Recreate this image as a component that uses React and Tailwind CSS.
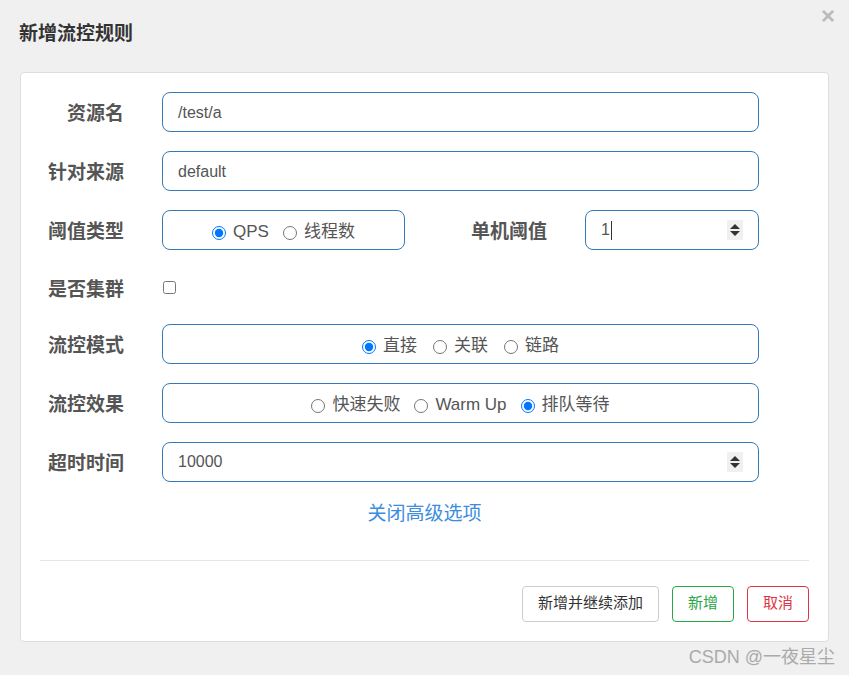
import React from "react";

const font = { fontFamily: '"Liberation Sans", "Noto Sans CJK SC", sans-serif' };

function Label({ children, w = "w-[103px]" }) {
  return (
    <div className={`${w} shrink-0 pt-[5px] text-right text-[19px] font-bold text-[#555]`}>{children}</div>
  );
}

function Radio({ label, checked }) {
  return (
    <label className="flex items-center gap-[7px]">
      <input type="radio" defaultChecked={checked} name={label} className="m-0 mt-[1px] h-[14px] w-[14px]" />
      <span>{label}</span>
    </label>
  );
}

function Spinner() {
  return (
    <span className="flex h-[20px] w-[16px] flex-col items-center justify-center gap-[2px] bg-[#f0f0f0]">
      <span className="h-0 w-0 border-x-[5px] border-b-[5px] border-x-transparent border-b-[#333]" />
      <span className="h-0 w-0 border-x-[5px] border-t-[5px] border-x-transparent border-t-[#333]" />
    </span>
  );
}

const box = "h-[40px] rounded-[8px] border border-[#337ab7] bg-white text-[16px] text-[#555]";

export default function App() {
  return (
    <div className="h-[675px] w-[849px] overflow-hidden bg-[#f0f0f0]" style={font}>
      {/* en-tête */}
      <div className="flex h-[72px] items-start justify-between">
        <h2 className="ml-[19px] mt-[20px] text-[19px] font-bold text-[#333]">新增流控规则</h2>
        <span className="mr-[14px] mt-[4px] text-[24px] font-bold leading-none text-[#bbb]">×</span>
      </div>

      {/* carte */}
      <div className="mx-[20px] h-[570px] rounded-[4px] border border-[#ddd] bg-white pt-[19px]">
        <div className="flex flex-col gap-[19px]">
          <div className="flex items-center gap-[38px]">
            <Label>资源名</Label>
            <div className={`${box} flex w-[597px] items-center px-[15px] pt-[2px]`}>/test/a</div>
          </div>

          <div className="flex items-center gap-[38px]">
            <Label>针对来源</Label>
            <div className={`${box} flex w-[597px] items-center px-[15px] pt-[2px]`}>default</div>
          </div>

          <div className="flex items-center">
            <Label>阈值类型</Label>
            <div className={`${box} ml-[38px] flex w-[243px] items-center justify-center gap-[14px] pt-[4px] text-[17px]`}>
              <Radio label="QPS" checked />
              <Radio label="线程数" />
            </div>
            <Label w="w-[142px]">单机阈值</Label>
            <div className={`${box} ml-[38px] flex w-[174px] items-center justify-between px-[15px]`}>
              <span className="flex items-center">
                1<span className="ml-[1px] h-[19px] w-px bg-[#333]" />
              </span>
              <Spinner />
            </div>
          </div>
        </div>

        <div className="mt-[19px] flex h-[37px] items-center gap-[38px]">
          <Label>是否集群</Label>
          <input type="checkbox" className="m-0 ml-[1px] h-[13px] w-[13px]" />
        </div>

        <div className="mt-[18px] flex flex-col gap-[19px]">
          <div className="flex items-center gap-[38px]">
            <Label>流控模式</Label>
            <div className={`${box} flex w-[597px] items-center justify-center gap-[16px] pt-[4px] text-[17px]`}>
              <Radio label="直接" checked />
              <Radio label="关联" />
              <Radio label="链路" />
            </div>
          </div>

          <div className="flex items-center gap-[38px]">
            <Label>流控效果</Label>
            <div className={`${box} flex w-[597px] items-center justify-center gap-[14px] pt-[4px] text-[17px]`}>
              <Radio label="快速失败" />
              <Radio label="Warm Up" />
              <Radio label="排队等待" checked />
            </div>
          </div>

          <div className="flex items-center gap-[38px]">
            <Label>超时时间</Label>
            <div className={`${box} flex w-[597px] items-center justify-between px-[15px]`}>
              <span>10000</span>
              <Spinner />
            </div>
          </div>
        </div>

        <div className="mt-[18px] flex justify-center text-[19px] text-[#3c8dde]">
          <span>关闭高级选项</span>
        </div>

        <div className="mx-[19px] mt-[31px] border-t border-[#e5e5e5]" />

        <div className="mr-[19px] mt-[25px] flex justify-end gap-[13px] text-[15px]">
          <button className="h-[36px] rounded-[4px] border border-[#ccc] px-[15px] text-[#333]">新增并继续添加</button>
          <button className="h-[36px] rounded-[4px] border border-[#28a745] px-[15px] text-[#28a745]">新增</button>
          <button className="h-[36px] rounded-[4px] border border-[#dc3545] px-[15px] text-[#dc3545]">取消</button>
        </div>
      </div>

      <div className="mr-[14px] mt-[2px] text-right text-[18px] text-[#aaa]">CSDN @一夜星尘</div>
    </div>
  );
}
